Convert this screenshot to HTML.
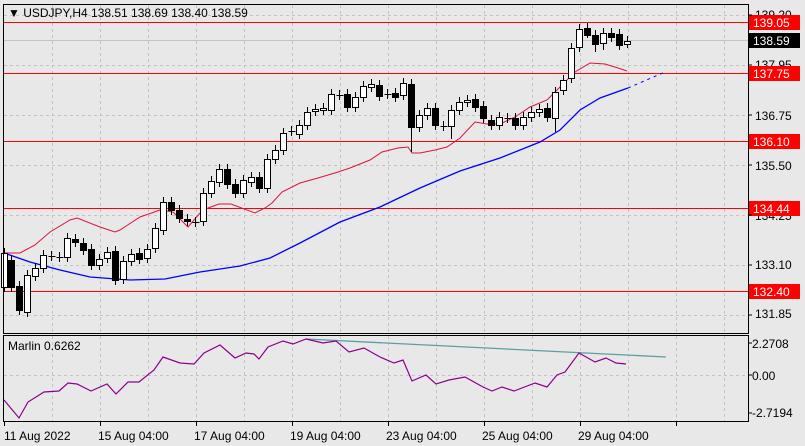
<!DOCTYPE html>
<html><head><meta charset="utf-8"><style>
body{margin:0;background:#e8e8e8;width:805px;height:446px;overflow:hidden;font-family:"Liberation Sans",sans-serif}
svg{display:block}
text{font-family:"Liberation Sans",sans-serif;font-size:12px;fill:#000}
</style></head><body>
<svg id="s" width="805" height="446" viewBox="0 0 805 446">
<rect width="805" height="446" fill="#e8e8e8"/>
<g id="grid" stroke="#c4c4c4" stroke-dasharray="3,3" stroke-width="1"></g>
<line x1="4" y1="40.5" x2="748" y2="40.5" stroke="#c4c4c4"/>
<g stroke="#f00" stroke-width="1">
<line x1="4" y1="22.5" x2="748" y2="22.5"/><line x1="4" y1="73.5" x2="748" y2="73.5"/>
<line x1="4" y1="141.5" x2="748" y2="141.5"/><line x1="4" y1="208.5" x2="748" y2="208.5"/>
<line x1="4" y1="291.5" x2="748" y2="291.5"/></g>
<polyline fill="none" stroke="#dc143c" stroke-width="1" points="4,253 20,253 35,245 50,232 70,220 77,218 100,227 115,232 120,230 140,217 160,210 173,212 188,227 200,213 208,208 219,204 231,204 255,213 265,208 272,203 282,192 300,183 318,178 338,172 350,168 370,160 382,152 398,148 408,147 412,153 420,153 435,150 447,147 460,138 475,122 487,124 500,124 515,117 530,107 547,100 562,85 575,72 590,63 605,64 618,68 627,71"/>
<polyline fill="none" stroke="#0000ff" stroke-width="1.3" points="4,253 30,262 60,270 90,277 130,280 165,279 200,272 240,266 270,258 300,243 340,222 380,207 420,188 460,171 500,158 540,142 560,130 580,110 600,98 628,88"/>
<line x1="628" y1="88" x2="665" y2="72" stroke="#0000ff" stroke-dasharray="3,4"/>
<g id="c"></g>
<rect x="3.5" y="4.5" width="745" height="329" fill="none" stroke="#000"/>
<rect x="3.5" y="335.5" width="745" height="86" fill="none" stroke="#000"/>
<text x="8" y="17" font-size="12">▼ USDJPY,H4  138.51 138.69 138.40 138.59</text>
<g font-size="12">
<text x="755" y="19">139.20</text><text x="755" y="69">137.95</text><text x="755" y="120">136.75</text>
<text x="755" y="170">135.50</text><text x="755" y="220">134.25</text><text x="755" y="269">133.10</text><text x="755" y="318">131.85</text>
</g>
<g fill="#f00"><rect x="749" y="15" width="51" height="15"/><rect x="749" y="66" width="51" height="15"/><rect x="749" y="134" width="51" height="15"/><rect x="749" y="201" width="51" height="15"/><rect x="749" y="284" width="51" height="15"/></g>
<rect x="749" y="33" width="51" height="15" fill="#000"/>
<g style="fill:#fff"><text x="753" y="27" style="fill:#fff">139.05</text><text x="753" y="78" style="fill:#fff">137.75</text><text x="753" y="146" style="fill:#fff">136.10</text><text x="753" y="213" style="fill:#fff">134.44</text><text x="753" y="296" style="fill:#fff">132.40</text><text x="753" y="45" style="fill:#fff">138.59</text></g>
<g stroke="#000"><line x1="748" y1="15" x2="752" y2="15"/><line x1="748" y1="65" x2="752" y2="65"/><line x1="748" y1="115" x2="752" y2="115"/><line x1="748" y1="165" x2="752" y2="165"/><line x1="748" y1="215" x2="752" y2="215"/><line x1="748" y1="265" x2="752" y2="265"/><line x1="748" y1="315" x2="752" y2="315"/>
<line x1="748" y1="343" x2="752" y2="343"/><line x1="748" y1="375" x2="752" y2="375"/><line x1="748" y1="413" x2="752" y2="413"/></g>
<line x1="4" y1="375.5" x2="748" y2="375.5" stroke="#c4c4c4" stroke-dasharray="3,3"/>
<line x1="306" y1="339" x2="666" y2="357" stroke="#5f9ea0" stroke-width="1.3"/>
<polyline fill="none" stroke="#8b008b" stroke-width="1.2" points="4,400 19,418 28,402 44,392 59,391 68,383 77,384 91,391 107,384 116,394 128,382 139,382 154,370 163,357 180,363 194,364 204,353 220,345 235,358 246,353 254,354 259,359 268,347 283,341 293,344 306,339 323,343 336,341 349,352 364,348 380,357 394,363 403,360 412,381 426,375 436,384 449,380 465,377 483,387 492,391 502,387 514,391 535,383 547,387 557,375 565,372 579,353 595,362 606,358 616,363 626,364"/>
<text x="8" y="350">Marlin 0.6262</text>
<text x="752" y="348">2.2708</text><text x="752" y="380">0.00</text><text x="752" y="417">-2.7194</text>
<g id="tk" stroke="#000"></g>
<text x="4" y="440">11 Aug 2022</text><text x="98" y="440">15 Aug 04:00</text><text x="194" y="440">17 Aug 04:00</text><text x="290" y="440">19 Aug 04:00</text><text x="386" y="440">23 Aug 04:00</text><text x="482" y="440">25 Aug 04:00</text><text x="578" y="440">29 Aug 04:00</text>
</svg>
<script>
var ns="http://www.w3.org/2000/svg";
function el(p,n,a){var e=document.createElementNS(ns,n);for(var k in a)e.setAttribute(k,a[k]);p.appendChild(e);return e;}
var g=document.getElementById("grid");
[15,65,115,165,215,265,315].forEach(function(y){el(g,"line",{x1:4,y1:y+.5,x2:748,y2:y+.5});});
for(var x=52;x<748;x+=48){el(g,"line",{x1:x+.5,y1:5,x2:x+.5,y2:333});el(g,"line",{x1:x+.5,y1:336,x2:x+.5,y2:421});}
var tk=document.getElementById("tk");
for(var x=4;x<748;x+=96){el(tk,"line",{x1:x+.5,y1:421,x2:x+.5,y2:426});}
// x, top, bottom, color(w/b/d)
var C=[[4,253,287,'w'],[11,260,287,'b'],[19,286,310,'b'],[27,275,312,'w'],[35,268,276,'w'],[43,255,268,'w'],[51,256,256,'d'],[59,257,257,'d'],[67,238,257,'w'],[75,239,242,'b'],[83,243,250,'b'],[91,249,265,'b'],[99,259,265,'w'],[107,252,258,'w'],[115,251,280,'b'],[123,261,279,'w'],[131,254,261,'w'],[139,253,259,'b'],[147,249,258,'w'],[155,228,248,'w'],[163,202,230,'w'],[171,202,210,'b'],[179,210,218,'b'],[187,219,221,'b'],[195,222,222,'d'],[203,193,221,'w'],[211,181,193,'w'],[219,169,182,'w'],[227,169,184,'b'],[235,184,193,'b'],[243,180,193,'w'],[251,177,182,'w'],[259,177,188,'b'],[267,159,188,'w'],[275,150,159,'w'],[283,133,150,'w'],[291,131,131,'d'],[299,125,134,'w'],[307,112,125,'w'],[315,109,111,'w'],[323,108,110,'w'],[331,94,110,'w'],[339,95,95,'d'],[347,94,107,'b'],[355,97,107,'w'],[363,86,97,'w'],[371,84,87,'w'],[379,85,96,'b'],[387,94,94,'d'],[395,93,97,'b'],[403,83,95,'w'],[411,84,127,'b',152],[419,115,127,'w'],[427,108,115,'w'],[435,108,125,'b'],[443,126,126,'d'],[451,110,126,'w',139],[459,102,110,'w'],[467,100,102,'w'],[475,99,107,'b'],[483,106,118,'b'],[491,120,125,'b'],[499,117,125,'w'],[507,118,118,'d'],[515,118,125,'b'],[523,117,125,'w'],[531,112,117,'w'],[539,109,112,'w'],[547,108,117,'b'],[555,92,118,'w',132],[563,80,90,'w'],[571,48,78,'w'],[579,29,47,'w'],[587,28,35,'b',38],[595,35,44,'b',52],[603,33,43,'w',50],[611,33,37,'b'],[619,34,45,'b'],[627,41,44,'w',48]];
var cg=document.getElementById("c");
C.forEach(function(c){var x=c[0]+.5,t=c[1],b=c[2],low=c[4]||b+5;
el(cg,"line",{x1:x,y1:t-5,x2:x,y2:low,stroke:"#000"});
if(c[3]=='d'){el(cg,"line",{x1:x-3,y1:t+.5,x2:x+4,y2:t+.5,stroke:"#000"});}
else el(cg,"rect",{x:x-3,y:t+.5,width:6,height:Math.max(b-t,1),fill:c[3]=='w'?"#fff":"#000",stroke:"#000"});});
</script>
</body></html>
